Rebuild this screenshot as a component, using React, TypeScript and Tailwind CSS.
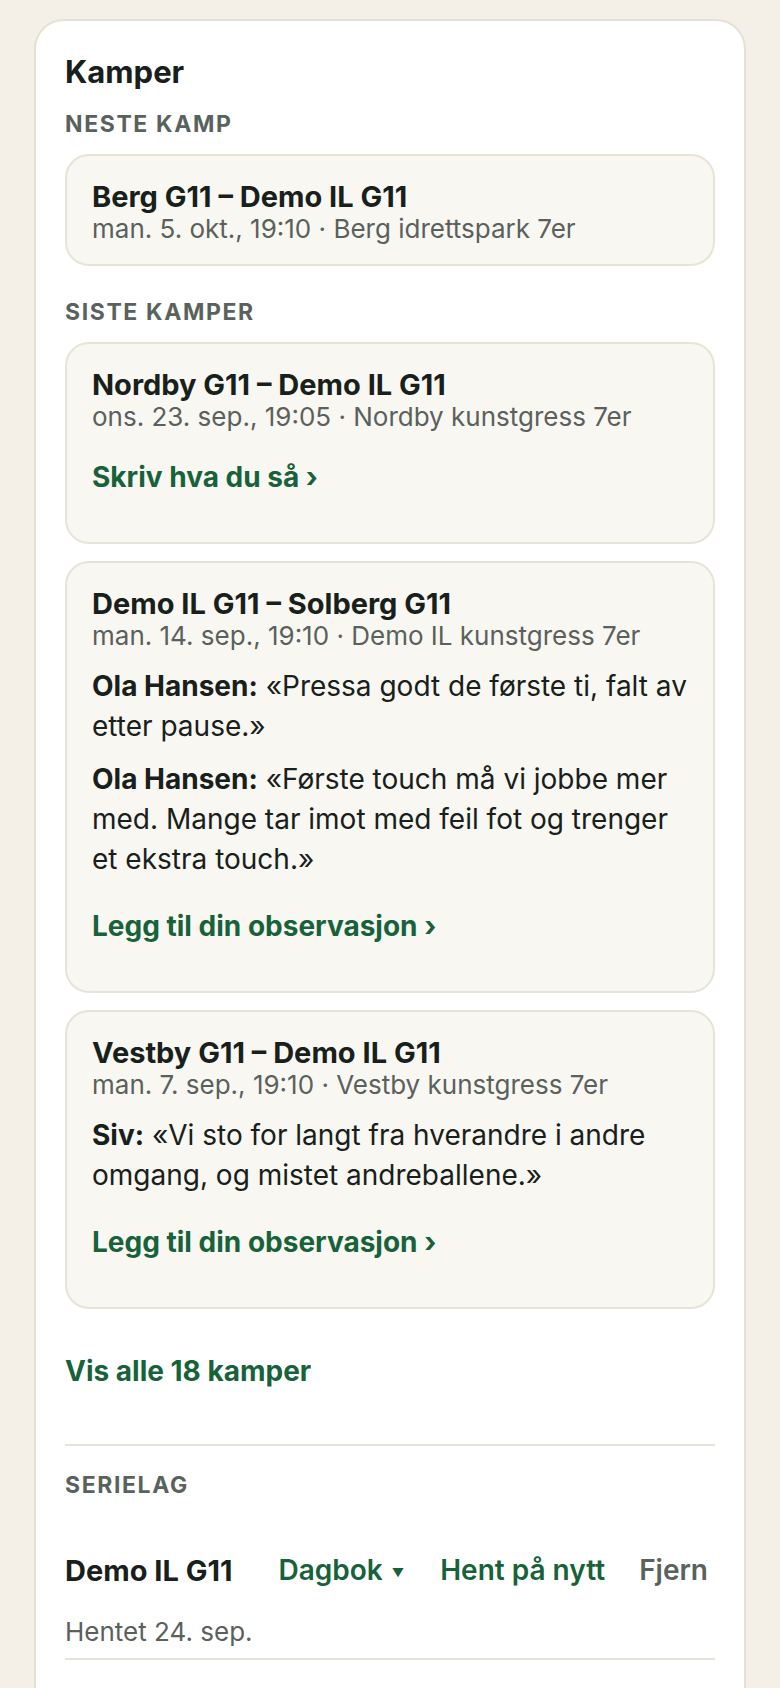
import * as React from "react";

type Note = { who: string; text: string };
type Match = { title: string; meta: string; notes?: Note[]; cta?: string };

const next: Match = {
  title: "Berg G11 – Demo IL G11",
  meta: "man. 5. okt., 19:10 · Berg idrettspark 7er",
};

const recent: Match[] = [
  {
    title: "Nordby G11 – Demo IL G11",
    meta: "ons. 23. sep., 19:05 · Nordby kunstgress 7er",
    cta: "Skriv hva du så ›",
  },
  {
    title: "Demo IL G11 – Solberg G11",
    meta: "man. 14. sep., 19:10 · Demo IL kunstgress 7er",
    notes: [
      { who: "Ola Hansen:", text: "«Pressa godt de første ti, falt av etter pause.»" },
      {
        who: "Ola Hansen:",
        text: "«Første touch må vi jobbe mer med. Mange tar imot med feil fot og trenger et ekstra touch.»",
      },
    ],
    cta: "Legg til din observasjon ›",
  },
  {
    title: "Vestby G11 – Demo IL G11",
    meta: "man. 7. sep., 19:10 · Vestby kunstgress 7er",
    notes: [{ who: "Siv:", text: "«Vi sto for langt fra hverandre i andre omgang, og mistet andreballene.»" }],
    cta: "Legg til din observasjon ›",
  },
];

export default function App() {
  return (
    <div className="min-h-screen bg-[#f4f0e7] px-[34px] pt-[19px] font-['Inter',sans-serif] text-[#18201b]">
      <section className="rounded-[30px] border-2 border-[#e6e0d2] bg-white px-[29px] pt-[33px] pb-[80px]">
        <h2 className="text-[31px] leading-[36px] font-bold">Kamper</h2>

        <Label className="mt-[19px]">Neste kamp</Label>
        <div className="mt-[15px]">
          <MatchCard m={next} />
        </div>

        <Label className="mt-[31px]">Siste kamper</Label>
        <ul className="mt-[15px] flex flex-col gap-[17px]">
          {recent.map((m) => (
            <li key={m.title}>
              <MatchCard m={m} />
            </li>
          ))}
        </ul>

        <a href="#" className="mt-[43px] block text-[28px] leading-[39px] font-bold text-[#17623a]">
          Vis alle 18 kamper
        </a>

        <div className="mt-[53px] h-[2px] bg-[#e8e3d8]" />

        {/* serielag */}
        <Label className="mt-[24px]">Serielag</Label>
        <div className="mt-[51px] flex items-center justify-between pr-[7px] text-[28px] leading-[39px] font-semibold">
          <span className="text-[29px] font-bold">Demo IL G11</span>
          <div className="flex items-center">
            <button className="flex items-center text-[#17623a]">
              Dagbok
              <span className="ml-[9px] mt-[4px] text-[12px] leading-none">▼</span>
            </button>
            <button className="ml-[36px] text-[#17623a]">Hent på nytt</button>
            <button className="ml-[34px] text-[#59625c]">Fjern</button>
          </div>
        </div>
        <p className="mt-[25px] text-[26px] leading-[33px] text-[#5a615d]">Hentet 24. sep.</p>
        <div className="mt-[10px] h-[2px] bg-[#e8e3d8]" />
      </section>
    </div>
  );
}

function Label({ children, className = "" }: { children: React.ReactNode; className?: string }) {
  return (
    <h3
      className={[
        "text-[23px] leading-[30px] font-bold uppercase tracking-[0.07em] text-[#59625c]",
        className,
      ].join(" ")}
    >
      {children}
    </h3>
  );
}

function MatchCard({ m }: { m: Match }) {
  return (
    <div className="rounded-[24px] border-2 border-[#e8e3d7] bg-[#f9f7f2] pl-[25px] pr-[18px] pt-[25px] pb-[19px]">
      <h4 className="text-[29px] leading-[32px] font-bold">{m.title}</h4>
      <p className="text-[26px] leading-[32px] text-[#5a615d]">{m.meta}</p>

      {m.notes && (
        <div className="mt-[14px] pb-[3px] flex flex-col gap-[13px]">
          {m.notes.map((n, i) => (
            <p key={i} className="text-[28px] leading-[40px]">
              <span className="font-bold">{n.who}</span> {n.text}
            </p>
          ))}
        </div>
      )}

      {m.cta && (
        <a href="#" className="mt-[25px] mb-[26px] block text-[28px] leading-[39px] font-bold text-[#17623a]">
          {m.cta}
        </a>
      )}
    </div>
  );
}
